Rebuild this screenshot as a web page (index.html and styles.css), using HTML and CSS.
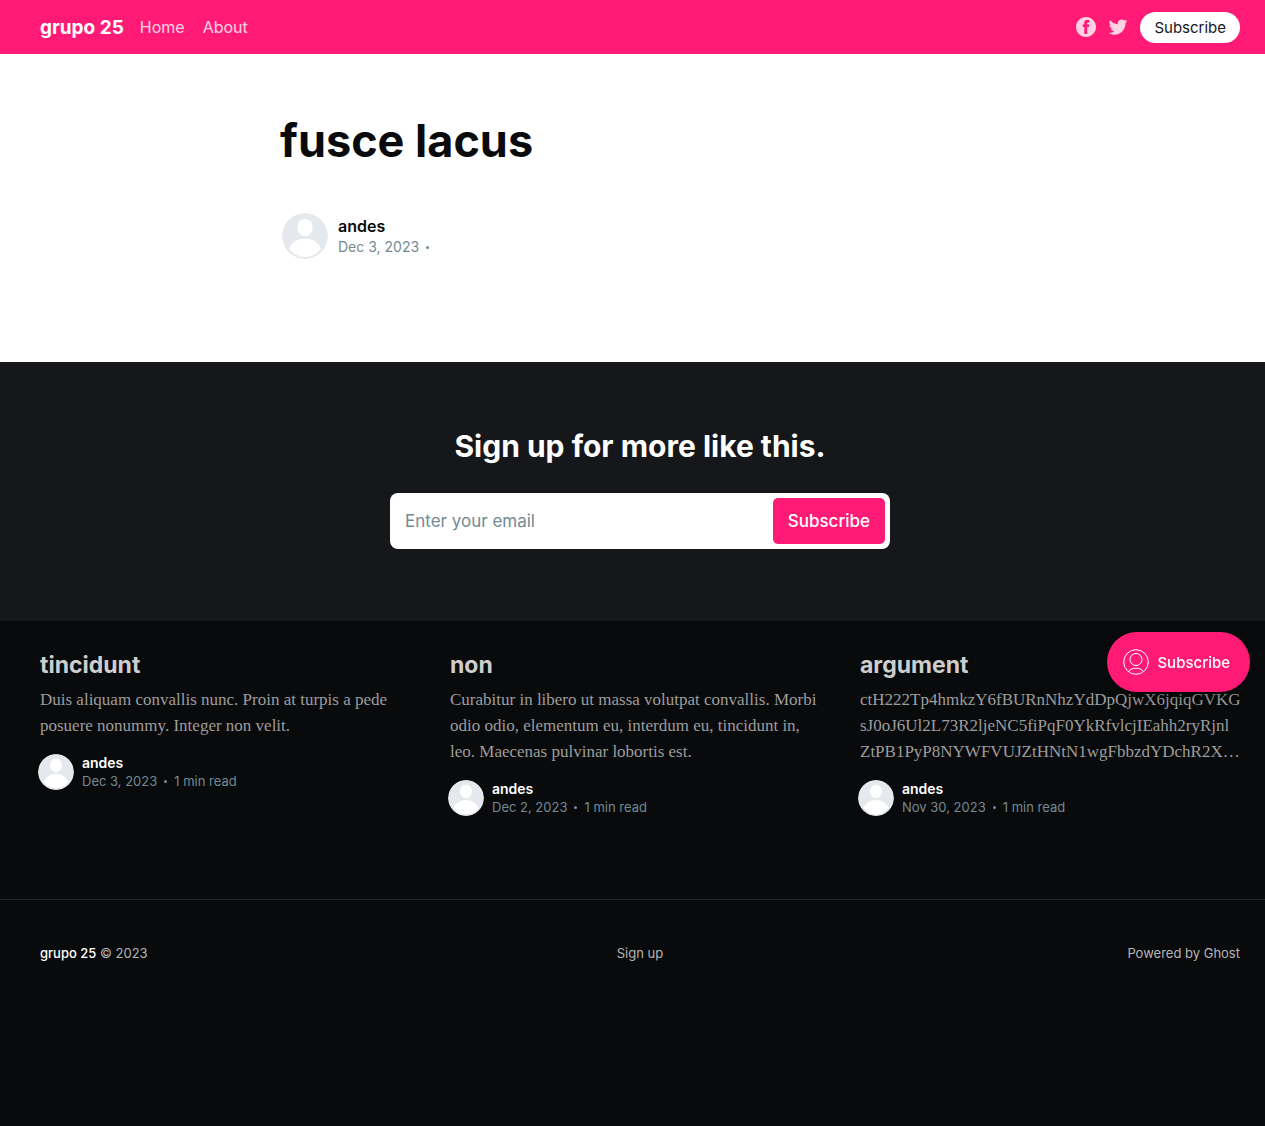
FILE: index.html
```html
<!DOCTYPE html>
<html lang="en">
<head>
<meta charset="utf-8">
<meta name="viewport" content="width=device-width, initial-scale=1">
<title>fusce lacus</title>
<link rel="stylesheet" href="styles.css">
</head>
<body>
<svg class="symbols" aria-hidden="true">
  <symbol id="avatar" viewBox="0 0 46 46">
    <circle cx="23" cy="23" r="23" fill="#e5e9ed"/>
    <ellipse cx="23" cy="14.500" rx="7.600" ry="8.700" fill="#fff"/>
    <path d="M7 35.500C10 29 16 25.500 23 25.500S36 29 39 35.500C35 41 29.500 44 23 44S11 41 7 35.500Z" fill="#fff"/>
  </symbol>
</svg>

<header class="site-header">
  <a class="brand" href="#">grupo 25</a>
  <nav class="site-nav">
    <a href="#">Home</a>
    <a href="#">About</a>
  </nav>
  <div class="site-actions">
    <a class="social" href="#" aria-label="Facebook">
      <svg width="20" height="20" viewBox="0 0 32 32" fill="currentColor"><path d="M16 0c8.837 0 16 7.163 16 16s-7.163 16-16 16S0 24.837 0 16 7.163 0 16 0zm5.204 4.911h-3.546c-2.103 0-4.443.885-4.443 3.934.01 1.062 0 2.080 0 3.225h-2.433v3.872h2.509v11.147h4.610v-11.220h3.042l.275-3.810h-3.397s.007-1.695 0-2.187c0-1.205 1.253-1.136 1.329-1.136h2.054V4.911z"/></svg>
    </a>
    <a class="social" href="#" aria-label="Twitter">
      <svg width="20" height="20" viewBox="1 1 30 30" fill="currentColor"><path d="M30.063 7.313c-.813 1.125-1.750 2.125-2.875 2.938v.750c0 1.563-.188 3.125-.688 4.625a15.088 15.088 0 0 1-2.063 4.438c-.875 1.438-2 2.688-3.250 3.813a15.015 15.015 0 0 1-4.625 2.563c-1.813.688-3.750 1-5.750 1-3.250 0-6.188-.875-8.875-2.625.438.063.875.125 1.375.125 2.688 0 5.063-.875 7.188-2.500-1.250 0-2.375-.375-3.375-1.125s-1.688-1.688-2.063-2.875c.438.063.813.125 1.125.125.500 0 1-.063 1.500-.250-1.313-.250-2.438-.938-3.313-1.938a5.673 5.673 0 0 1-1.313-3.688v-.063c.813.438 1.688.688 2.625.688a5.228 5.228 0 0 1-1.875-2c-.500-.875-.688-1.813-.688-2.750 0-1.063.250-2.063.750-2.938 1.438 1.750 3.188 3.188 5.250 4.250s4.313 1.688 6.688 1.813a5.579 5.579 0 0 1 1.500-5.438c1.125-1.125 2.500-1.688 4.125-1.688s3.063.625 4.188 1.813a11.480 11.480 0 0 0 3.688-1.375c-.438 1.375-1.313 2.438-2.563 3.188 1.125-.125 2.188-.438 3.313-.875z"/></svg>
    </a>
    <button class="pill" type="button">Subscribe</button>
  </div>
</header>

<main>
  <article class="post">
    <h1>fusce lacus</h1>
    <div class="byline byline-large">
      <svg class="avatar"><use href="#avatar"/></svg>
      <div>
        <a class="author" href="#">andes</a>
        <p class="meta"><time datetime="2023-12-03">Dec 3, 2023</time><span class="dot"></span></p>
      </div>
    </div>
  </article>

  <section class="signup">
    <h2>Sign up for more like this.</h2>
    <form class="signup-form">
      <input type="email" placeholder="Enter your email" aria-label="Enter your email">
      <button type="button">Subscribe</button>
    </form>
  </section>
</main>

<aside class="related">
  <article class="card">
    <h2>tincidunt</h2>
    <p class="excerpt">Duis aliquam convallis nunc. Proin at turpis a pede<br>posuere nonummy. Integer non velit.</p>
    <div class="byline">
      <svg class="avatar"><use href="#avatar"/></svg>
      <div>
        <a class="author" href="#">andes</a>
        <p class="meta"><time datetime="2023-12-03">Dec 3, 2023</time><span class="dot"></span>1 min read</p>
      </div>
    </div>
  </article>
  <article class="card">
    <h2>non</h2>
    <p class="excerpt">Curabitur in libero ut massa volutpat convallis. Morbi<br>odio odio, elementum eu, interdum eu, tincidunt in,<br>leo. Maecenas pulvinar lobortis est.</p>
    <div class="byline">
      <svg class="avatar"><use href="#avatar"/></svg>
      <div>
        <a class="author" href="#">andes</a>
        <p class="meta"><time datetime="2023-12-02">Dec 2, 2023</time><span class="dot"></span>1 min read</p>
      </div>
    </div>
  </article>
  <article class="card">
    <h2>argument</h2>
    <p class="excerpt">ctH222Tp4hmkzY6fBURnNhzYdDpQjwX6jqiqGVKG<br>sJ0oJ6Ul2L73R2ljeNC5fiPqF0YkRfvlcjIEahh2ryRjnl<br>ZtPB1PyP8NYWFVUJZtHNtN1wgFbbzdYDchR2X…</p>
    <div class="byline">
      <svg class="avatar"><use href="#avatar"/></svg>
      <div>
        <a class="author" href="#">andes</a>
        <p class="meta"><time datetime="2023-11-30">Nov 30, 2023</time><span class="dot"></span>1 min read</p>
      </div>
    </div>
  </article>
</aside>

<footer class="site-footer">
  <p><a class="footer-brand" href="#">grupo 25</a> © 2023</p>
  <a href="#">Sign up</a>
  <a class="powered" href="#">Powered by Ghost</a>
</footer>

<button class="portal" type="button">
  <svg width="26" height="26" viewBox="0 0 26 26" fill="none" stroke="currentColor" stroke-width="1"><circle cx="13" cy="13" r="12.300"/><circle cx="13" cy="10.500" r="6"/><path d="M5.500 22.500C7.300 20.200 10 19.200 13 19.200s5.700 1 7.500 3.300"/></svg>
  Subscribe
</button>
</body>
</html>
```

FILE: styles.css
```css
:root {
  --pink: #ff1a75;
  --ink: #090a0b;
  --slate: #738a94;
  --sans: Inter, "Liberation Sans", sans-serif;
  --serif: "Liberation Serif", serif;
  --gutter: 0 25px 0 40px;
}

* { box-sizing: border-box; }

body {
  margin: 0;
  min-height: 100vh;
  background: var(--ink);
  color: var(--ink);
  font-family: var(--sans);
}

h1, h2, p { margin: 0; }
a { color: inherit; text-decoration: none; }
button, input { border: 0; font: inherit; }
button { cursor: pointer; }
.symbols { display: none; }

.site-header {
  display: flex;
  align-items: center;
  min-height: 54px;
  padding: var(--gutter);
  background: var(--pink);
  color: #fff;
}

.brand { font-size: 19px; font-weight: 700; }

.site-nav {
  display: flex;
  gap: 18px;
  margin-left: 16px;
  font-size: 16px;
  opacity: 0.8;
}

.site-actions {
  display: flex;
  align-items: center;
  gap: 12px;
  margin-left: auto;
}

.social { display: flex; opacity: 0.8; }

.pill {
  padding: 6px 14px;
  border-radius: 30px;
  background: #fff;
  color: #15171a;
  font-size: 15px;
  line-height: 19px;
}

.post {
  padding: 56px 25px 103px 280px;
  background: #fff;
}

.post h1 { font-size: 45px; font-weight: 700; line-height: 62px; }

.byline {
  display: flex;
  align-items: center;
  gap: 8px;
  margin: 15px 0 0 -2px;
}

.byline .avatar {
  width: 36px;
  height: 36px;
  border-radius: 50%;
}

.author {
  display: block;
  color: #fff;
  font-size: 14px;
  font-weight: 600;
  line-height: 18px;
}

.meta {
  display: flex;
  align-items: center;
  color: var(--slate);
  font-size: 13px;
  line-height: 18px;
}

.dot {
  width: 3px;
  height: 3px;
  margin: 0 7px;
  border-radius: 50%;
  background: currentColor;
}

.byline-large { gap: 10px; margin: 41px 0 0 2px; }
.byline-large .avatar { width: 46px; height: 46px; }
.byline-large .author { color: var(--ink); font-size: 16px; line-height: 22px; }
.byline-large .meta { font-size: 14px; line-height: 20px; }

.signup {
  display: flex;
  flex-direction: column;
  align-items: center;
  gap: 27px;
  padding: 64px 25px 72px 40px;
  background: #15171a;
  color: #fff;
}

.signup h2 { font-size: 30px; font-weight: 700; line-height: 40px; }

.signup-form {
  display: flex;
  width: 100%;
  max-width: 500px;
  padding: 5px;
  border-radius: 8px;
  background: #fff;
}

.signup-form input {
  flex: 1;
  min-width: 0;
  padding: 0 10px;
  background: transparent;
  color: var(--ink);
  font-size: 17px;
}

.signup-form input::placeholder { color: var(--slate); opacity: 1; }

.signup-form button {
  padding: 0 15px;
  border-radius: 5px;
  background: var(--pink);
  color: #fff;
  font-size: 17px;
  font-weight: 500;
  line-height: 46px;
}

.related {
  display: grid;
  grid-template-columns: repeat(3, minmax(0, 1fr));
  gap: 30px;
  padding: 29px 25px 83px 40px;
}

.card h2 {
  color: #cecece;
  font-size: 23px;
  font-weight: 700;
  line-height: 30px;
}

.excerpt {
  margin-top: 7px;
  color: #9d9d9d;
  font-family: var(--serif);
  font-size: 17px;
  line-height: 26px;
  white-space: nowrap;
}

.site-footer {
  display: grid;
  grid-template-columns: 1fr auto 1fr;
  padding: 44px 25px 140px 40px;
  border-top: 1px solid #232425;
  color: #b5b6b6;
  font-size: 13px;
  line-height: 18px;
}

.footer-brand { color: #fff; font-weight: 500; }
.powered { text-align: right; }

.portal {
  position: fixed;
  right: 15px;
  top: 632px;
  display: flex;
  align-items: center;
  gap: 8px;
  height: 60px;
  padding: 0 20px 0 16px;
  border-radius: 30px;
  background: var(--pink);
  color: #fff;
  font-size: 15px;
  font-weight: 500;
  box-shadow: 0 8px 16px -8px rgba(0, 0, 0, 0.5);
}
```
